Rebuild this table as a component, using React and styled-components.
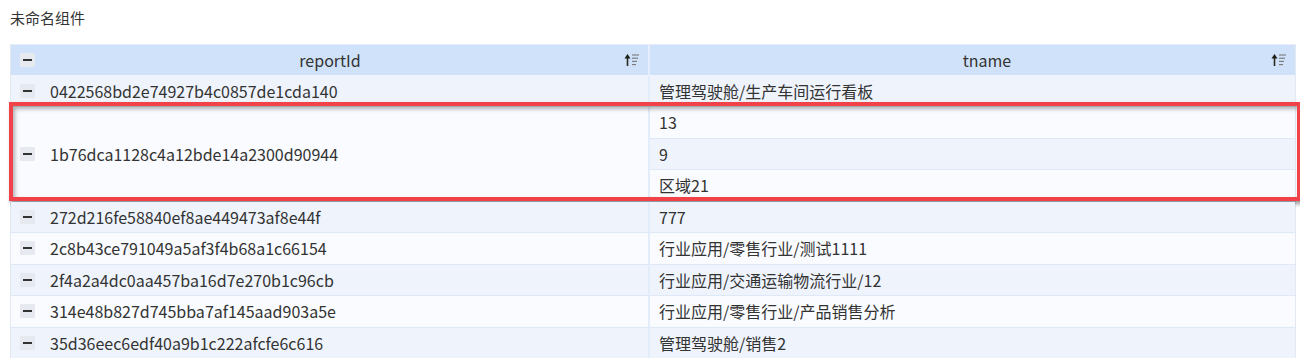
import React from "react";
import styled, { createGlobalStyle } from "styled-components";

const GlobalStyle = createGlobalStyle`
  html, body { margin: 0; padding: 0; background: #ffffff; }
  body {
    font-family: "Noto Sans CJK SC", "Noto Sans", sans-serif;
    color: #333333;
  }
`;

const Page = styled.div`
  width: 1300px;
  box-sizing: border-box;
  padding: 0 4px 0 10px;
`;

const Title = styled.div`
  height: 36px;
  line-height: 36px;
  font-size: 15px;
  color: #333;
  margin-bottom: 8px;
`;

const Table = styled.div`
  border-left: 1px solid #e2e9f3;
  border-right: 1px solid #e2e9f3;
  width: 1286px;
  box-sizing: border-box;
`;

const HeaderRow = styled.div`
  display: grid;
  grid-template-columns: 639px 1fr;
  height: 31.5px;
  background: #cfe2fa;
  border-top: 1px solid #e6eef9;
  border-bottom: 1px solid #eef4fc;
  box-sizing: border-box;
`;

const HeaderCell = styled.div`
  display: grid;
  grid-template-columns: 1fr auto 1fr;
  align-items: center;
  padding: 0 8px 0 9px;
  font-size: 16px;
  color: #333;
  border-right: ${(p) => (p.$last ? "none" : "2px solid #e4eefc")};
`;

const HeaderLabel = styled.span`
  padding-left: ${(p) => p.$shift || 0}px;
`;

const SortIcon = styled.svg`
  justify-self: end;
  width: 16px;
  height: 14px;
`;

const Row = styled.div`
  display: grid;
  grid-template-columns: 639px 1fr;
  background: ${(p) => (p.$alt ? "#eff4fc" : "#f9fbfe")};
  position: relative;
`;

const Cell = styled.div`
  display: flex;
  align-items: center;
  gap: 15px;
  height: ${(p) => (p.$auto ? "auto" : "31.5px")};
  padding-left: 9px;
  font-size: 16px;
  color: #333;
  box-sizing: border-box;
  border-bottom: 1px solid #dfe8f6;
  border-right: ${(p) => (p.$first ? "2px solid #e3ecf9" : "none")};
  white-space: nowrap;
`;

const SubList = styled.div`
  display: flex;
  flex-direction: column;
`;

const SubRow = styled.div`
  display: flex;
  align-items: center;
  height: 31.5px;
  padding-left: 9px;
  font-size: 16px;
  color: #333;
  box-sizing: border-box;
  background: ${(p) => (p.$alt ? "#eff4fc" : "#f9fbfe")};
  border-bottom: 1px solid #dfe8f6;
`;

const Minus = styled.span`
  flex: none;
  width: 15px;
  height: 14px;
  background: #e6eaf0;
  border-radius: 1px;
  display: flex;
  align-items: center;
  justify-content: center;
  justify-self: start;
  &::before {
    content: "";
    width: 9px;
    height: 2px;
    background: #333;
  }
`;

const Highlight = styled.div`
  position: absolute;
  top: -5px;
  bottom: 1px;
  left: -2px;
  right: -6px;
  border: 4px solid #f1424a;
  box-shadow: 2px 3px 4px rgba(0, 0, 0, 0.4),
    inset 2px 3px 4px rgba(0, 0, 0, 0.3);
  pointer-events: none;
`;

const Sort = () => (
  <SortIcon viewBox="0 0 16 14">
    <line x1="3.5" y1="13" x2="3.5" y2="3" stroke="#2a2a1e" strokeWidth="1.6" />
    <polygon points="0.5,5.5 3.5,1 6.5,5.5" fill="#1e1e14" />
    <line x1="8" y1="2" x2="15" y2="2" stroke="#777" strokeWidth="1.1" />
    <line x1="8" y1="5.2" x2="14" y2="5.2" stroke="#777" strokeWidth="1.1" />
    <line x1="8" y1="8.4" x2="13" y2="8.4" stroke="#777" strokeWidth="1.1" />
    <line x1="8" y1="11.6" x2="12" y2="11.6" stroke="#777" strokeWidth="1.1" />
  </SortIcon>
);

const rows = [
  { id: "0422568bd2e74927b4c0857de1cda140", names: ["管理驾驶舱/生产车间运行看板"] },
  { id: "1b76dca1128c4a12bde14a2300d90944", names: ["13", "9", "区域21"], highlight: true },
  { id: "272d216fe58840ef8ae449473af8e44f", names: ["777"] },
  { id: "2c8b43ce791049a5af3f4b68a1c66154", names: ["行业应用/零售行业/测试1111"] },
  { id: "2f4a2a4dc0aa457ba16d7e270b1c96cb", names: ["行业应用/交通运输物流行业/12"] },
  { id: "314e48b827d745bba7af145aad903a5e", names: ["行业应用/零售行业/产品销售分析"] },
  { id: "35d36eec6edf40a9b1c222afcfe6c616", names: ["管理驾驶舱/销售2"] },
];

export default function App() {
  return (
    <>
      <GlobalStyle />
      <Page>
        <Title>未命名组件</Title>
        <Table>
          <HeaderRow>
            <HeaderCell>
              <Minus />
              <HeaderLabel>reportId</HeaderLabel>
              <Sort />
            </HeaderCell>
            <HeaderCell $last>
              <span />
              <HeaderLabel $shift={28}>tname</HeaderLabel>
              <Sort />
            </HeaderCell>
          </HeaderRow>
          {rows.map((r, i) => {
            const alt = i % 2 === 0 && !r.highlight;
            if (r.names.length > 1) {
              return (
                <Row key={r.id} $alt={false}>
                  <Cell $first $auto>
                    <Minus />
                    {r.id}
                  </Cell>
                  <SubList>
                    {r.names.map((n, j) => (
                      <SubRow key={n} $alt={j % 2 === 1}>
                        {n}
                      </SubRow>
                    ))}
                  </SubList>
                  {r.highlight && <Highlight />}
                </Row>
              );
            }
            return (
              <Row key={r.id} $alt={alt}>
                <Cell $first>
                  <Minus />
                  {r.id}
                </Cell>
                <Cell>{r.names[0]}</Cell>
              </Row>
            );
          })}
        </Table>
      </Page>
    </>
  );
}
